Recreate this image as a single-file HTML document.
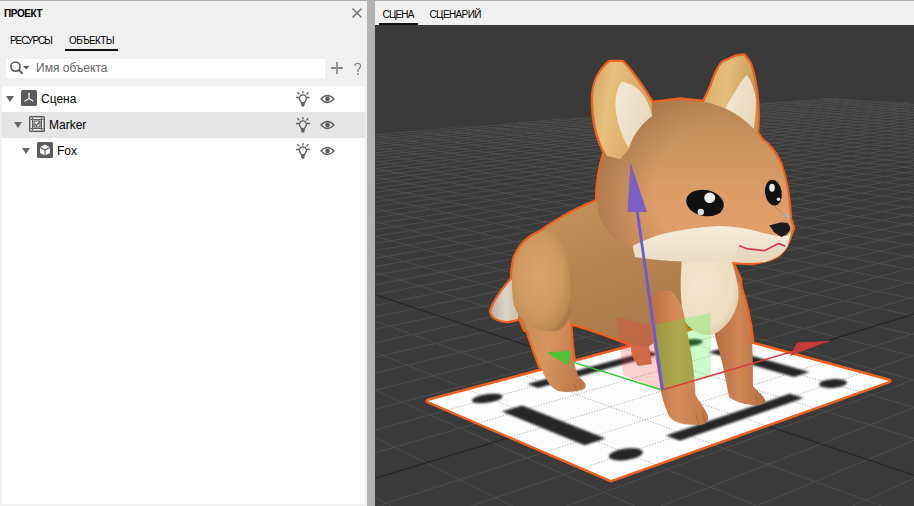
<!DOCTYPE html>
<html><head><meta charset="utf-8">
<style>
*{margin:0;padding:0;box-sizing:border-box}
html,body{width:914px;height:506px;overflow:hidden;background:#f0f0f0;font-family:"Liberation Sans",sans-serif;color:#000}
.a{position:absolute}
#topline{left:0;top:0;width:914px;height:1px;background:#acacac}
#sep{left:367px;top:0;width:8px;height:506px;background:#b3b3b3}
.t{white-space:nowrap;line-height:1}
#list{left:2px;top:86px;width:363px;height:418px;background:#fff}
.row{position:absolute;left:0;width:363px;height:26px}
.sel{background:#e5e5e5}
.tri{position:absolute;width:0;height:0;border-left:4px solid transparent;border-right:4px solid transparent;border-top:6px solid #666}
.ico{position:absolute;width:16px;height:16px;background:#5b5b5b;border-radius:2px}
#view{left:375px;top:25px;width:539px;height:481px;background:#393939;overflow:hidden}
</style></head><body>
<div class="a" id="topline"></div>
<div class="a t" style="left:4px;top:9.4px;font-size:10px;font-weight:bold;letter-spacing:-0.4px">ПРОЕКТ</div>
<svg class="a" style="left:351px;top:7px" width="12" height="12" viewBox="0 0 12 12"><path d="M1.5 1.5L10.5 10.5M10.5 1.5L1.5 10.5" stroke="#6a6a6a" stroke-width="1.4"/></svg>
<div class="a t" style="left:10px;top:36px;font-size:10px;letter-spacing:-1.05px">РЕСУРСЫ</div>
<div class="a t" style="left:69px;top:36px;font-size:10px;letter-spacing:-0.62px">ОБЪЕКТЫ</div>
<div class="a" style="left:65px;top:49px;width:53px;height:2px;background:#111"></div>
<div class="a" style="left:6px;top:59px;width:319px;height:19px;background:#fff"></div>
<svg class="a" style="left:8px;top:60px" width="24" height="17" viewBox="0 0 24 17"><circle cx="7.5" cy="6.6" r="4.6" fill="none" stroke="#5a5a5a" stroke-width="1.6"/><path d="M10.8 10L14.6 13.8" stroke="#5a5a5a" stroke-width="2"/><path d="M15 6H21.5L18.25 9.6Z" fill="#5a5a5a"/></svg>
<div class="a t" style="left:36px;top:62px;font-size:12px;color:#666">Имя объекта</div>
<svg class="a" style="left:330px;top:61px" width="14" height="14" viewBox="0 0 14 14"><path d="M7 1V13M1 7H13" stroke="#8a8a8a" stroke-width="1.8"/></svg>
<svg class="a" style="left:352px;top:61.5px" width="12" height="14" viewBox="0 0 12 14"><path d="M2.9 4.1C2.9 2.3 4.1 1.3 5.7 1.3C7.4 1.3 8.6 2.4 8.6 4C8.6 6 6.4 6.5 6 8.5V10.1" fill="none" stroke="#868686" stroke-width="1.3"/><circle cx="6" cy="12.2" r="0.9" fill="#868686"/></svg>
<div class="a" id="list">
 <div class="row" style="top:0"></div>
 <div class="row sel" style="top:26px"></div>
</div>

<div class="a tri" style="left:6px;top:96px"></div>
<svg class="a" style="left:21px;top:90px" width="16" height="16" viewBox="0 0 16 16"><rect x="0" y="0" width="16" height="16" rx="1.5" fill="#5b5b5b"/><path d="M8 3.2V8.6M8 8.6L3.6 11.2M8 8.6L12.4 11.2" stroke="#fff" stroke-width="1.1" fill="none"/><path d="M6.9 4.4L8 2.6L9.1 4.4Z" fill="#fff"/></svg>
<div class="a t" style="left:41px;top:93px;font-size:12px">Сцена</div>
<div class="a tri" style="left:14px;top:122px"></div>
<svg class="a" style="left:29px;top:116px" width="16" height="16" viewBox="0 0 16 16"><rect x="0" y="0" width="16" height="16" rx="1.5" fill="#5b5b5b"/><rect x="1.5" y="1.5" width="13" height="13" fill="#fff"/><path d="M1.5 3.5H14.5M1.5 12.5H14.5M3.5 1.5V14.5M12.5 1.5V14.5" stroke="#5b5b5b" stroke-width="1.2"/><rect x="5" y="5" width="6" height="6" fill="none" stroke="#5b5b5b" stroke-width="1.2"/><path d="M5.8 8L7.4 9.6L10.6 5.8" stroke="#5b5b5b" stroke-width="1.3" fill="none"/></svg>
<div class="a t" style="left:49px;top:119px;font-size:12px">Marker</div>
<div class="a tri" style="left:22px;top:148px"></div>
<svg class="a" style="left:37px;top:142px" width="16" height="16" viewBox="0 0 16 16"><rect x="0" y="0" width="16" height="16" rx="1.5" fill="#5b5b5b"/><path d="M8 2.6L13 5.3V10.9L8 13.6L3 10.9V5.3Z" fill="#fff"/><path d="M3.3 5.5L8 8.1L12.7 5.5M8 8.1V13.4" stroke="#5b5b5b" stroke-width="1.1" fill="none"/></svg>
<div class="a t" style="left:57px;top:145px;font-size:12px">Fox</div>
<svg class="a" style="left:294px;top:88px" width="18" height="20" viewBox="0 0 18 20"><path d="M8.9 6.8C5.3 6.8 4.9 10.4 6 12.4C6.8 13.6 7.3 14 7.3 14.8H10.5C10.5 14 11 13.6 11.8 12.4C12.9 10.4 12.5 6.8 8.9 6.8Z" fill="none" stroke="#606060" stroke-width="1.3"/><path d="M7.2 14.2H10.6V17.8Q8.9 19.6 7.2 17.8Z" fill="#606060"/><path d="M8.9 3V5.6M2 9.5H5.2M12.6 9.5H15.8M3.4 4.2L5.4 6.4M14.4 4.2L12.4 6.4" stroke="#606060" stroke-width="1.3"/></svg>
<svg class="a" style="left:319.5px;top:93px" width="16" height="12" viewBox="0 0 16 12"><path d="M1 6Q7.5 -1 14 6Q7.5 13 1 6Z" fill="none" stroke="#606060" stroke-width="1.3"/><circle cx="7.5" cy="6" r="2.4" fill="#606060"/></svg>
<svg class="a" style="left:294px;top:114px" width="18" height="20" viewBox="0 0 18 20"><path d="M8.9 6.8C5.3 6.8 4.9 10.4 6 12.4C6.8 13.6 7.3 14 7.3 14.8H10.5C10.5 14 11 13.6 11.8 12.4C12.9 10.4 12.5 6.8 8.9 6.8Z" fill="none" stroke="#606060" stroke-width="1.3"/><path d="M7.2 14.2H10.6V17.8Q8.9 19.6 7.2 17.8Z" fill="#606060"/><path d="M8.9 3V5.6M2 9.5H5.2M12.6 9.5H15.8M3.4 4.2L5.4 6.4M14.4 4.2L12.4 6.4" stroke="#606060" stroke-width="1.3"/></svg>
<svg class="a" style="left:319.5px;top:119px" width="16" height="12" viewBox="0 0 16 12"><path d="M1 6Q7.5 -1 14 6Q7.5 13 1 6Z" fill="none" stroke="#606060" stroke-width="1.3"/><circle cx="7.5" cy="6" r="2.4" fill="#606060"/></svg>
<svg class="a" style="left:294px;top:140px" width="18" height="20" viewBox="0 0 18 20"><path d="M8.9 6.8C5.3 6.8 4.9 10.4 6 12.4C6.8 13.6 7.3 14 7.3 14.8H10.5C10.5 14 11 13.6 11.8 12.4C12.9 10.4 12.5 6.8 8.9 6.8Z" fill="none" stroke="#606060" stroke-width="1.3"/><path d="M7.2 14.2H10.6V17.8Q8.9 19.6 7.2 17.8Z" fill="#606060"/><path d="M8.9 3V5.6M2 9.5H5.2M12.6 9.5H15.8M3.4 4.2L5.4 6.4M14.4 4.2L12.4 6.4" stroke="#606060" stroke-width="1.3"/></svg>
<svg class="a" style="left:319.5px;top:145px" width="16" height="12" viewBox="0 0 16 12"><path d="M1 6Q7.5 -1 14 6Q7.5 13 1 6Z" fill="none" stroke="#606060" stroke-width="1.3"/><circle cx="7.5" cy="6" r="2.4" fill="#606060"/></svg>
<div class="a" id="sep"></div>
<div class="a t" style="left:382.5px;top:10px;font-size:10px;letter-spacing:-0.82px">СЦЕНА</div>
<div class="a t" style="left:429.5px;top:10px;font-size:10px;letter-spacing:-0.62px">СЦЕНАРИЙ</div>
<div class="a" style="left:379px;top:23px;width:39px;height:2px;background:#111"></div>
<!--VIEW--><svg class="a" style="left:375px;top:25px" width="539" height="481" viewBox="375 25 539 481">
<defs>
<clipPath id="floorclip"><path d="M375,133.5L830,98L914,103L914,506L375,506Z"/></clipPath>
<clipPath id="mclip"><path d="M428.0,401.0L698.0,329.0L889.0,381.0L611.0,480.0Z"/></clipPath>

<linearGradient id="gEarL" x1="0" y1="0" x2="1" y2="0.3"><stop offset="0" stop-color="#d9a364"/><stop offset="0.35" stop-color="#e6c07e"/><stop offset="1" stop-color="#d8a062"/></linearGradient>
<linearGradient id="gEarR" x1="0" y1="0" x2="1" y2="0.2"><stop offset="0" stop-color="#dcae6c"/><stop offset="0.5" stop-color="#e4bd7a"/><stop offset="1" stop-color="#c99658"/></linearGradient>
<linearGradient id="gInner" x1="0" y1="0" x2="1" y2="0.4"><stop offset="0" stop-color="#f3e9d6"/><stop offset="1" stop-color="#e9d9bd"/></linearGradient>
<linearGradient id="gHead" gradientUnits="userSpaceOnUse" x1="0" y1="100" x2="0" y2="250"><stop offset="0" stop-color="#bf8a56"/><stop offset="0.3" stop-color="#c99460"/><stop offset="0.6" stop-color="#dc9c68"/><stop offset="1" stop-color="#e2a06c"/></linearGradient><radialGradient id="gHeadL" gradientUnits="userSpaceOnUse" cx="720" cy="190" r="120"><stop offset="0.55" stop-color="#8a5e38" stop-opacity="0"/><stop offset="1" stop-color="#8a5e38" stop-opacity="0.5"/></radialGradient>
<linearGradient id="gBody" x1="0.2" y1="0" x2="0.8" y2="1"><stop offset="0" stop-color="#c4915c"/><stop offset="0.5" stop-color="#b3824f"/><stop offset="1" stop-color="#a87648"/></linearGradient>
<radialGradient id="gThigh" cx="0.45" cy="0.45" r="0.62"><stop offset="0" stop-color="#d9a56b"/><stop offset="0.6" stop-color="#cf9a62"/><stop offset="0.9" stop-color="#bf8954"/><stop offset="1" stop-color="#ad7847"/></radialGradient>
<linearGradient id="gLeg" x1="0" y1="0" x2="1" y2="0.3"><stop offset="0" stop-color="#c98a55"/><stop offset="0.5" stop-color="#d5955c"/><stop offset="1" stop-color="#c27a4c"/></linearGradient>
<linearGradient id="gFLeg" x1="0" y1="0" x2="1" y2="0"><stop offset="0" stop-color="#b96d42"/><stop offset="0.5" stop-color="#d68c5a"/><stop offset="1" stop-color="#c07648"/></linearGradient><linearGradient id="gFLeg2" x1="0" y1="0" x2="1" y2="0"><stop offset="0" stop-color="#b36a40"/><stop offset="0.5" stop-color="#cf8554"/><stop offset="1" stop-color="#b86e42"/></linearGradient>
<radialGradient id="gChest" cx="0.35" cy="0.35" r="0.8"><stop offset="0" stop-color="#f4e6cf"/><stop offset="0.7" stop-color="#ecdcc0"/><stop offset="1" stop-color="#d8bf98"/></radialGradient>
<linearGradient id="gTail" x1="0" y1="0" x2="1" y2="0"><stop offset="0" stop-color="#b9b0a3"/><stop offset="0.5" stop-color="#dcd4c6"/><stop offset="1" stop-color="#c8bca8"/></linearGradient>
<linearGradient id="gMuz" x1="0" y1="0" x2="0" y2="1"><stop offset="0" stop-color="#f6eddc"/><stop offset="1" stop-color="#eadbc2"/></linearGradient>
<filter id="blur1" x="-10%" y="-10%" width="120%" height="120%"><feGaussianBlur stdDeviation="0.9"/></filter>
</defs>
<rect x="375" y="25" width="539" height="481" fill="#3a3a3a"/>
<g clip-path="url(#floorclip)">
<path d="M1024.1,874.7L1833.7,154.5M-399.6,894.9L-464.2,220.2M853.6,877.1L1802.4,152.5M-194.3,892.0L-416.3,215.4M683.2,879.5L1771.9,150.6M11.0,889.1L-370.1,210.8M512.8,881.9L1742.2,148.7M216.3,886.2L-325.7,206.4M342.3,884.4L1713.3,146.8M421.7,883.2L-282.8,202.1M171.9,886.8L1685.1,145.0M627.0,880.3L-241.5,198.0M1.5,889.2L1657.7,143.3M832.3,877.4L-201.6,194.1M-168.9,891.6L1630.9,141.6M1037.6,874.5L-163.1,190.2M-339.4,894.0L1604.8,139.9M1242.9,871.6L-125.9,186.5M-509.8,896.5L1579.3,138.3M1448.3,868.7L-90.0,183.0M-680.2,898.9L1554.4,136.7M1653.6,865.7L-55.2,179.5M-850.7,901.3L1530.2,135.2M1858.9,862.8L-21.5,176.2M-1191.5,906.1L1483.3,132.2M2269.6,857.0L42.7,169.8M-1361.9,908.6L1460.7,130.8M2474.9,854.1L73.3,166.7M-1532.4,911.0L1438.6,129.4M2659.9,845.7L103.0,163.8M-1702.8,913.4L1417.0,128.0M2613.5,780.4L131.8,160.9M-1873.2,915.8L1395.9,126.6M2573.6,724.1L159.8,158.1M-2043.7,918.2L1375.2,125.3M2538.9,675.1L187.0,155.4M-2214.1,920.7L1355.0,124.0M2508.4,632.1L213.4,152.8M-2368.2,919.6L1335.2,122.8M2481.4,594.1L239.0,150.2M-2249.5,862.0L1315.8,121.5M2457.4,560.2L263.9,147.8M-2144.8,811.4L1296.9,120.3M2435.8,529.8L288.2,145.4M-2051.9,766.3L1278.3,119.2M2416.4,502.4L311.8,143.0M-1968.8,726.1L1260.2,118.0M2398.8,477.5L334.8,140.7M-1894.1,689.9L1242.4,116.9M2382.7,454.9L357.1,138.5M-1826.6,657.2L1224.9,115.8M2368.0,434.2L378.9,136.3M-1765.2,627.4L1207.8,114.7M2354.6,415.2L400.2,134.2M-1709.2,600.3L1191.1,113.6M2342.2,397.7L420.9,132.2M-1657.9,575.5L1174.7,112.6M2330.7,381.5L441.0,130.2M-1610.7,552.6L1158.5,111.5M2320.1,366.5L460.7,128.2M-1567.2,531.5L1142.7,110.5M2310.2,352.6L479.9,126.3M-1526.9,512.0L1127.3,109.6M2301.0,339.6L498.7,124.4M-1489.5,493.9L1112.0,108.6M2292.4,327.5L517.0,122.6M-1454.7,477.0L1097.1,107.6M2284.3,316.1L534.8,120.8M-1422.2,461.3L1082.5,106.7M2276.8,305.5L552.3,119.1M-1391.8,446.5L1068.1,105.8M2269.7,295.5L569.4,117.4M-1363.4,432.8L1054.0,104.9M2263.0,286.0L586.0,115.7M-1336.6,419.8L1040.1,104.0M2256.7,277.1L602.3,114.1M-1311.5,407.6L1026.5,103.1M2250.7,268.7L618.3,112.5M-1287.7,396.1L1013.1,102.3M2245.1,260.8L633.8,111.0M-1265.3,385.3L1000.0,101.5M2239.7,253.2L649.1,109.5M-1244.2,375.0L987.1,100.6M2234.6,246.0L664.0,108.0M-1224.1,365.3L974.4,99.8M2229.8,239.2L678.6,106.5M-1205.1,356.1L961.9,99.0M2225.2,232.8L692.9,105.1M-1187.0,347.3L949.7,98.3M2220.8,226.6L706.9,103.7M-1169.8,339.0L937.6,97.5M2216.7,220.7L720.6,102.4M-1153.5,331.1L925.8,96.7M2212.7,215.1L734.0,101.0M-1137.9,323.5L914.1,96.0M2208.9,209.7L747.2,99.7M-1123.0,316.3L902.7,95.3M2205.2,204.6L760.1,98.4M-1108.7,309.4L891.4,94.6M2201.7,199.6L772.7,97.2M-1095.1,302.8L880.3,93.8M2198.4,194.9L785.1,95.9M-1082.1,296.5L869.4,93.2M2195.2,190.4L797.3,94.7M-1069.6,290.5L858.6,92.5M2192.1,186.0L809.2,93.6M-1057.6,284.7L848.1,91.8M2189.1,181.8L820.9,92.4M-1046.2,279.1L837.6,91.1M2186.3,177.8L832.4,91.2M-1035.1,273.7L827.4,90.5M2183.5,174.0L843.6,90.1" stroke="#4d4d4d" stroke-width="1" fill="none"/>
<path d="M-1021.1,903.7L1506.5,133.7M2064.2,859.9L11.1,172.9" stroke="#262626" stroke-width="1.2" fill="none"/>
</g>
<path d="M428.0,401.0L698.0,329.0L889.0,381.0L611.0,480.0Z" fill="none" stroke="#ee6020" stroke-width="5" stroke-linejoin="round"/>
<path d="M630,341L648,340L652,364L638,366L632,356Z" fill="#ee6020" stroke="#ee6020" stroke-width="4.5" stroke-linejoin="round"/>
<path d="M512,279C503,289 495,300 491,311C492,318 500,321 508,321L518,319L520,292Z" fill="#ee6020" stroke="#ee6020" stroke-width="4.5" stroke-linejoin="round"/>
<path d="M600,200C580,207 558,219 540,232C525,242 515,258 513,280C514,300 518,315 525,330L569,323C585,326 607,335 631,344L648,347L684,322L716,326L740,300L740,280L732,262L640,250Z" fill="#ee6020" stroke="#ee6020" stroke-width="4.5" stroke-linejoin="round"/>
<path d="M722,282L739,282C745,300 750,320 752,340C753,360 753,372 753,386C758,392 764,396 765.5,401C764,405 758,405 752,405C742,404 734,401 729,397C726,380 722,360 716,340L712,320Z" fill="#ee6020" stroke="#ee6020" stroke-width="4.5" stroke-linejoin="round"/>
<path d="M524,320C530,338 536,358 542,370C546,380 551,388 558,391C566,393 576,392 584,389C588,386 585,382 579,377C574,368 572,352 571,335C570,325 570,318 569,312L540,300Z" fill="#ee6020" stroke="#ee6020" stroke-width="4.5" stroke-linejoin="round"/>
<path d="M548,231C534,232 521,242 515,257C511,270 511,290 514,305C518,318 530,328 545,331C558,333 567,328 570,315C572,300 571,280 568,262C565,247 559,233 548,231Z" fill="#ee6020" stroke="#ee6020" stroke-width="4.5" stroke-linejoin="round"/>
<path d="M650,297C654,291 664,290 671,291C677,296 682,305 684,315C688,335 692,355 694,375L695.5,395C700,403 706,409 708,416C709,421 706,424 700,425L688,424.5C680,424 672,421 669,416C664,405 661,395 660,385C656,360 651,330 649,310Z" fill="#ee6020" stroke="#ee6020" stroke-width="4.5" stroke-linejoin="round"/>
<path d="M703,104L711,87C715,75 719,66 723,62.5L736,56.6L744,55.4L750,63.7C754,76 756,88 757,100C758,112 758,122 757,133L740,125Z" fill="#ee6020" stroke="#ee6020" stroke-width="4.5" stroke-linejoin="round"/>
<path d="M605,152C600,165 597,185 597,200C597,222 608,238 632,249L685,260L732,262L751,263C762,262 771,259 777,256C784,250 788,243 790,236L793,228L790,219C789,200 787,182 780,163C776,154 770,146 762,140L757,133C745,117 725,106 704,102L680,99.5L663,101.8L652,103C632,115 614,135 605,152Z" fill="#ee6020" stroke="#ee6020" stroke-width="4.5" stroke-linejoin="round"/>
<path d="M607,156C597,140 593,118 593,99C593,82 599,71 609.6,62L622.5,62C632,72 642,86 652,103L652,116L637,125L629.8,148L620,159Z" fill="#ee6020" stroke="#ee6020" stroke-width="4.5" stroke-linejoin="round"/>

<path d="M428.0,401.0L698.0,329.0L889.0,381.0L611.0,480.0Z" fill="#fdfdfd"/>
<g clip-path="url(#mclip)">
<path d="M583.2,468.0L860.8,373.3M654.5,464.5L469.1,390.0M545.9,451.9L822.5,362.9M712.0,444.0L524.1,375.4M511.2,436.9L786.4,353.1M765.0,425.2L575.3,361.7M478.7,422.9L752.2,343.7M813.9,407.8L623.3,348.9M448.3,409.7L719.8,334.9M859.1,391.6L668.1,337.0" stroke="#8c8c8c" stroke-width="0.7" stroke-dasharray="1.2 1.6" fill="none"/>
<g filter="url(#blur1)"><path d="M584.6,445.2L605.5,438.4L522.3,405.5L501.9,411.4ZM794.0,377.0L809.4,372.0L723.8,347.9L708.5,352.3ZM679.8,440.8L803.6,398.0L789.7,393.8L665.9,435.6ZM538.0,388.0L659.5,354.3L648.5,350.9L527.3,384.0Z" fill="#262626"/><path d="M640.0,449.4L637.1,448.6L633.5,448.2L629.3,448.2L625.0,448.6L620.6,449.4L616.7,450.5L613.3,451.9L610.7,453.4L609.2,455.0L608.8,456.6L609.6,458.0L611.5,459.1L614.4,459.9L618.1,460.4L622.3,460.4L626.8,459.9L631.2,459.1L635.2,458.0L638.6,456.6L641.1,455.0L642.5,453.4L642.8,451.9L641.9,450.5ZM500.9,394.7L498.6,394.1L495.5,393.8L491.9,393.8L488.0,394.1L484.0,394.7L480.3,395.6L477.0,396.6L474.4,397.8L472.6,399.1L471.9,400.3L472.2,401.3L473.5,402.2L475.8,402.9L479.0,403.2L482.6,403.2L486.7,402.8L490.7,402.2L494.5,401.3L497.8,400.2L500.4,399.0L502.0,397.8L502.7,396.6L502.3,395.5ZM843.3,379.9L840.6,379.4L837.3,379.1L833.7,379.1L830.1,379.4L826.7,379.9L823.7,380.8L821.3,381.8L819.7,382.9L819.1,384.0L819.3,385.2L820.5,386.2L822.6,387.0L825.4,387.6L828.7,387.9L832.4,387.9L836.0,387.6L839.5,387.0L842.5,386.1L844.9,385.1L846.4,384.0L847.0,382.8L846.7,381.7L845.4,380.7ZM700.4,339.8L698.1,339.3L695.3,339.1L692.2,339.1L688.9,339.4L685.7,339.8L682.7,340.5L680.3,341.3L678.5,342.2L677.5,343.1L677.4,344.0L678.2,344.8L679.7,345.5L682.0,345.9L684.9,346.2L688.1,346.2L691.5,345.9L694.7,345.4L697.7,344.8L700.1,343.9L701.8,343.0L702.7,342.1L702.8,341.2L702.0,340.4Z" fill="#262626"/></g>
</g>
<path d="M630,341L648,340L652,364L638,366L632,356Z" fill="#c27a4c"/>
<path d="M512,279C503,289 495,300 491,311C492,318 500,321 508,321L518,319L520,292Z" fill="url(#gTail)"/>
<path d="M600,200C580,207 558,219 540,232C525,242 515,258 513,280C514,300 518,315 525,330L569,323C585,326 607,335 631,344L648,347L684,322L716,326L740,300L740,280L732,262L640,250Z" fill="url(#gBody)"/>
<path d="M722,282L739,282C745,300 750,320 752,340C753,360 753,372 753,386C758,392 764,396 765.5,401C764,405 758,405 752,405C742,404 734,401 729,397C726,380 722,360 716,340L712,320Z" fill="url(#gFLeg2)"/>
<path d="M524,320C530,338 536,358 542,370C546,380 551,388 558,391C566,393 576,392 584,389C588,386 585,382 579,377C574,368 572,352 571,335C570,325 570,318 569,312L540,300Z" fill="url(#gLeg)"/>
<path d="M548,231C534,232 521,242 515,257C511,270 511,290 514,305C518,318 530,328 545,331C558,333 567,328 570,315C572,300 571,280 568,262C565,247 559,233 548,231Z" fill="url(#gThigh)"/>
<path d="M682,258L731,259C736,275 740,290 738,302C734,318 724,330 712,335C700,336 690,330 684,320C680,300 680,280 682,258Z" fill="url(#gChest)"/>
<path d="M650,297C654,291 664,290 671,291C677,296 682,305 684,315C688,335 692,355 694,375L695.5,395C700,403 706,409 708,416C709,421 706,424 700,425L688,424.5C680,424 672,421 669,416C664,405 661,395 660,385C656,360 651,330 649,310Z" fill="url(#gFLeg)"/>
<path d="M703,104L711,87C715,75 719,66 723,62.5L736,56.6L744,55.4L750,63.7C754,76 756,88 757,100C758,112 758,122 757,133L740,125Z" fill="url(#gEarR)"/>
<path d="M747,75C741,80 735,92 730,100L725,108.8C736,114 746,122 753.5,130C756,115 756,104 755.9,99C754,88 751,80 747,75Z" fill="url(#gInner)"/>
<path d="M605,152C600,165 597,185 597,200C597,222 608,238 632,249L685,260L732,262L751,263C762,262 771,259 777,256C784,250 788,243 790,236L793,228L790,219C789,200 787,182 780,163C776,154 770,146 762,140L757,133C745,117 725,106 704,102L680,99.5L663,101.8L652,103C632,115 614,135 605,152Z" fill="url(#gHead)"/>
<path d="M605,152C600,165 597,185 597,200C597,222 608,238 632,249L685,260L732,262L751,263C762,262 771,259 777,256C784,250 788,243 790,236L793,228L790,219C789,200 787,182 780,163C776,154 770,146 762,140L757,133C745,117 725,106 704,102L680,99.5L663,101.8L652,103C632,115 614,135 605,152Z" fill="url(#gHeadL)"/>
<path d="M607,156C597,140 593,118 593,99C593,82 599,71 609.6,62L622.5,62C632,72 642,86 652,103L652,116L637,125L629.8,148L620,159Z" fill="url(#gEarL)"/>
<path d="M622.5,81.6C617,86 615,98 615.6,109C617,124 623,138 628.4,147.8C633,136 641,124 652,116C650,104 643,92 633.4,85.6Z" fill="url(#gInner)"/>

<path d="M695.9,413.3L698.6,423.8M702.5,412L705,422M755,393.6L757.7,402.8M760.3,393L763.6,401.5M574,384L577,392M579,383L582,391" stroke="#8f5530" stroke-width="0.9" stroke-opacity="0.55" fill="none"/>
<path d="M632.6,246C645,240 655,236 663,233.8C680,230 700,227 718,226C735,226 750,229 763,233C775,236 783,237 788,235.5L791,231.5C790,238 789,243 786,249C781,255 775,259 765,262C755,263 745,263 733,262C715,262 690,262 670,261C655,260 640,258 635,257Z" fill="url(#gMuz)"/>
<path d="M739,245C748,248 758,250 767,251C773,249 777,245 784,246C787,247 789,245 790,240C789,244 787,249 784,250C778,256 772,259 765,262C752,263 742,263 733,262C735,255 737,250 739,245Z" fill="#e6d6be" opacity="0.8"/>
<path d="M739,245.5L746.7,248.7L764.7,250.6L773.7,246.1L778.8,243.5L785.2,246.1" stroke="#d03c50" stroke-width="1.7" fill="none"/>
<ellipse cx="705" cy="203" rx="19" ry="13" transform="rotate(12 705 203)" fill="#111"/>
<ellipse cx="709.7" cy="197.7" rx="5.5" ry="5.2" fill="#eeeeee"/>
<circle cx="700.8" cy="211.9" r="3.2" fill="#dddddd"/>
<ellipse cx="773.3" cy="192.7" rx="8.3" ry="13" transform="rotate(-8 773 192)" fill="#111"/>
<ellipse cx="772" cy="187.8" rx="2.8" ry="4" fill="#e8e8e8"/>
<circle cx="778.5" cy="199.3" r="1.8" fill="#dddddd"/>
<path d="M781.4,214.6L788.4,212.7L790.4,220.4L786.5,219.1Z" fill="#b8b2ac"/><path d="M773.7,205L787.8,219" stroke="#9a6a48" stroke-width="0.8" stroke-opacity="0.6"/>
<path d="M769.2,225.5L773.7,224.3L781.4,222.3L787.8,223L790.4,227.5L789.7,230.7L786.5,234.5L781.4,237.1L773.7,232L772.4,229.4Z" fill="#1c1c1c"/>

<path d="M616,316.8L649.3,324.7L662.2,391L623.6,375.2Z" fill="#ff3030" fill-opacity="0.22"/>
<path d="M655.3,324.5L710.7,313L710.7,377L662,390Z" fill="#33ff33" fill-opacity="0.25"/>
<path d="M662,390L572.8,362.2" stroke="#33cc33" stroke-width="1.4"/>
<path d="M546.6,352.4L571.2,350.7L567.9,365.5Z" fill="#4fc23a"/>
<path d="M662,390L828.8,340.9" stroke="#e03a3a" stroke-width="1.4"/>
<path d="M797,342.5L828.8,340.9L790,356Z" fill="#c83a3a"/>
<path d="M662.5,390L637.3,211.6" stroke="#6a58d6" stroke-width="2.8"/>
<path d="M630.4,162.5L627.6,212L647,212Z" fill="#7c5ec4"/>

</svg><!--/VIEW-->
</body></html>
